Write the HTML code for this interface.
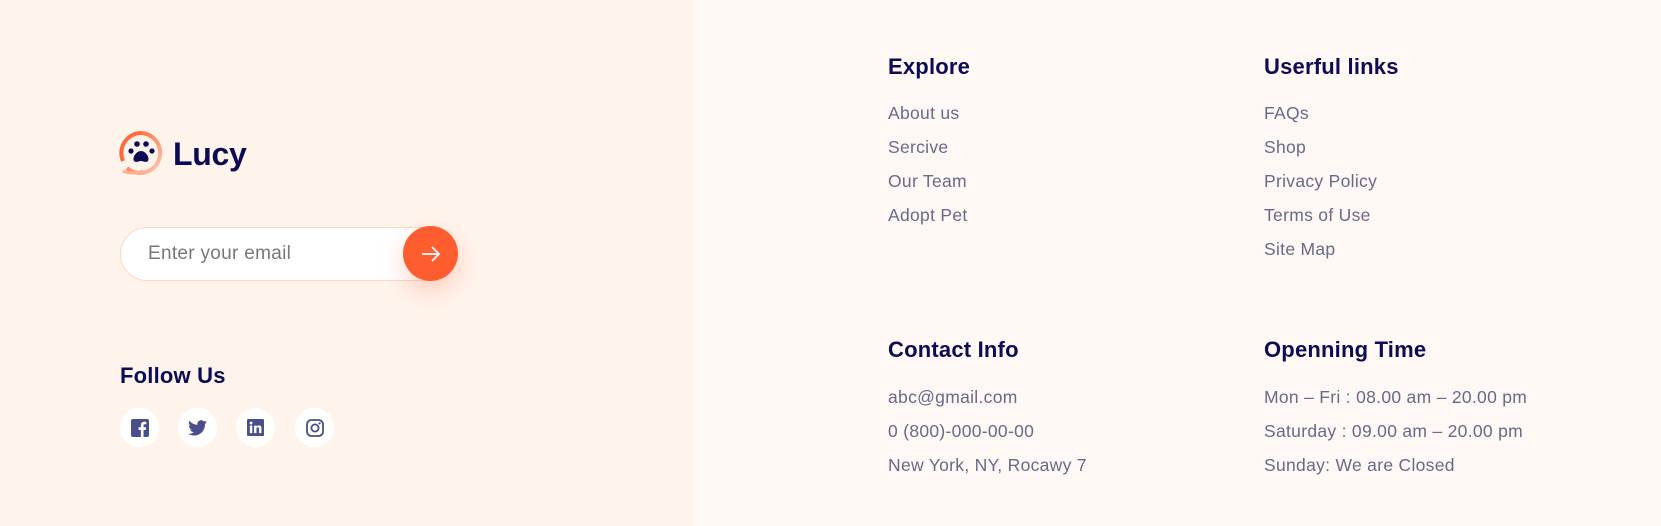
<!DOCTYPE html>
<html><head><style>
*{margin:0;padding:0;box-sizing:border-box}
body{width:1661px;height:526px;background:#fff8f4;font-family:"Liberation Sans",sans-serif;position:relative;overflow:hidden}
.left{position:absolute;left:0;top:0;width:695px;height:526px;background:#fff4ec}
.a{position:absolute}
h3{position:absolute;font-size:22px;font-weight:bold;color:#0b0c55;line-height:1;letter-spacing:0.2px}
.l{position:absolute;font-size:17.5px;color:#676a8a;line-height:1;letter-spacing:0.3px}
.soc{position:absolute;top:408px;width:39px;height:39px;border-radius:50%;background:#fff;display:flex;align-items:center;justify-content:center}
</style></head><body>
<div class="left"></div>
<svg class="a" style="left:119px;top:131px" width="45" height="46" viewBox="0 0 45 46">
<defs><linearGradient id="g" x1="0" y1="0" x2="1" y2="1"><stop offset="0" stop-color="#ff5a2e"/><stop offset="1" stop-color="#ffc9b0"/></linearGradient></defs>
<path d="M22 2 A20 20 0 1 1 8 37" fill="none" stroke="url(#g)" stroke-width="4"/>
<path d="M22 2 A20 20 0 0 0 4 30" fill="none" stroke="#ff6a3d" stroke-width="4"/>
<path d="M4 40 Q14 44 24 40" fill="none" stroke="#ffb090" stroke-width="3"/>
<circle cx="12" cy="20" r="2.6" fill="#0b0c55"/><circle cx="18" cy="13" r="2.8" fill="#0b0c55"/><circle cx="27" cy="13" r="2.8" fill="#0b0c55"/><circle cx="33" cy="20" r="2.6" fill="#0b0c55"/>
<path d="M22 20 C17 20 13 27 15 30 C17 32 20 30 22 30 C24 30 27 32 29 30 C31 27 27 20 22 20Z" fill="#0b0c55"/>
</svg>
<div class="a" style="left:173px;top:136px;font-size:32px;font-weight:bold;color:#0b0c55;letter-spacing:-0.3px">Lucy</div>
<div class="a" style="left:120px;top:227px;width:335px;height:54px;border-radius:27px;background:#fff;border:1px solid #fbd7c8"></div>
<div class="a" style="left:148px;top:243px;font-size:19px;color:#777;letter-spacing:0.3px">Enter your email</div>
<div class="a" style="left:403px;top:226px;width:55px;height:55px;border-radius:50%;background:#ff5d30;box-shadow:0 10px 25px rgba(255,93,48,.25);display:flex;align-items:center;justify-content:center">
<svg width="22" height="18" viewBox="0 0 22 18"><path d="M2 9H19M12 2L19 9L12 16" fill="none" stroke="#fff" stroke-width="1.8"/></svg></div>
<h3 style="left:120px;top:365px">Follow Us</h3>
<div class="soc" style="left:120px"><svg width="18" height="18" viewBox="0 0 18 18"><rect width="18" height="18" rx="2" fill="#4a4f8c"/><path d="M12.5 18V11h2.3l.4-2.7h-2.7V6.6c0-.8.3-1.3 1.4-1.3h1.4V2.9c-.3 0-1.1-.1-2-.1-2 0-3.4 1.2-3.4 3.5v2H7.6V11h2.3v7z" fill="#fff"/></svg></div>
<div class="soc" style="left:178px"><svg width="19" height="16" viewBox="0 0 24 20"><path d="M24 2.4c-.9.4-1.8.6-2.8.8 1-.6 1.8-1.6 2.2-2.7-1 .6-2 1-3.1 1.200A4.9 4.9 0 0 0 11.9 6 14 14 0 0 1 1.7.9a4.9 4.9 0 0 0 1.5 6.6c-.8 0-1.6-.3-2.2-.6 0 2.4 1.7 4.4 3.900 4.8-.7.2-1.5.2-2.2.1.6 2 2.4 3.4 4.6 3.4A9.9 9.9 0 0 1 0 17.3 14 14 0 0 0 7.5 19.5c9.1 0 14-7.5 14-14v-.6c1-.7 1.8-1.6 2.5-2.5z" fill="#4a4f8c"/></svg></div>
<div class="soc" style="left:236px"><svg width="17" height="17" viewBox="0 0 18 18"><rect width="18" height="18" rx="1.5" fill="#4a4f8c"/><rect x="3" y="7" width="2.6" height="8" fill="#fff"/><circle cx="4.3" cy="4.3" r="1.5" fill="#fff"/><path d="M7.5 7h2.5v1.1c.4-.7 1.3-1.3 2.6-1.3 2.3 0 2.7 1.5 2.7 3.4V15h-2.6v-4.2c0-1 0-2-1.3-2s-1.4.9-1.4 1.9V15H7.5z" fill="#fff"/></svg></div>
<div class="soc" style="left:295px"><svg width="18" height="18" viewBox="0 0 18 18"><rect x="1" y="1" width="16" height="16" rx="4.5" fill="none" stroke="#4a4f8c" stroke-width="1.8"/><circle cx="9" cy="9" r="3.6" fill="none" stroke="#4a4f8c" stroke-width="1.8"/><circle cx="13.6" cy="4.4" r="1.1" fill="#4a4f8c"/></svg></div>

<h3 style="left:888px;top:56px">Explore</h3>
<div class="l" style="left:888px;top:105px">About us</div>
<div class="l" style="left:888px;top:139px">Sercive</div>
<div class="l" style="left:888px;top:173px">Our Team</div>
<div class="l" style="left:888px;top:207px">Adopt Pet</div>

<h3 style="left:1264px;top:56px">Userful links</h3>
<div class="l" style="left:1264px;top:105px">FAQs</div>
<div class="l" style="left:1264px;top:139px">Shop</div>
<div class="l" style="left:1264px;top:173px">Privacy Policy</div>
<div class="l" style="left:1264px;top:207px">Terms of Use</div>
<div class="l" style="left:1264px;top:241px">Site Map</div>

<h3 style="left:888px;top:339px">Contact Info</h3>
<div class="l" style="left:888px;top:389px">abc@gmail.com</div>
<div class="l" style="left:888px;top:423px">0 (800)-000-00-00</div>
<div class="l" style="left:888px;top:457px">New York, NY, Rocawy 7</div>

<h3 style="left:1264px;top:339px">Openning Time</h3>
<div class="l" style="left:1264px;top:389px">Mon – Fri : 08.00 am – 20.00 pm</div>
<div class="l" style="left:1264px;top:423px">Saturday : 09.00 am – 20.00 pm</div>
<div class="l" style="left:1264px;top:457px">Sunday: We are Closed</div>
</body></html>
